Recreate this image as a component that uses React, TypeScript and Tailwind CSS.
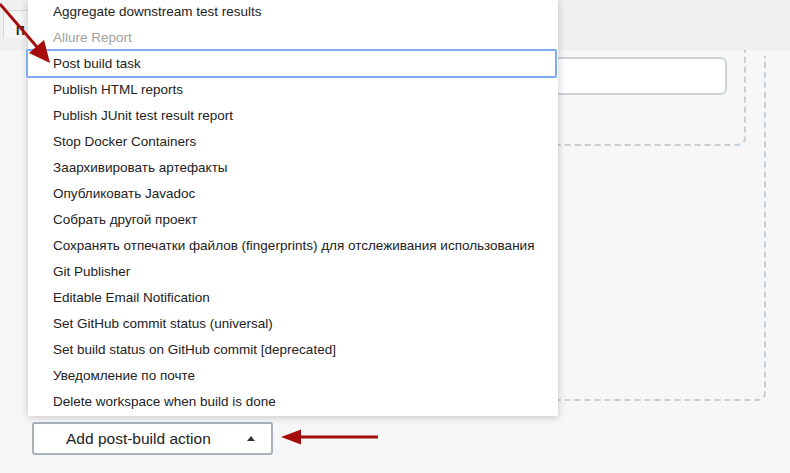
const items = [
  { label: 'Aggregate downstream test results' },
  { label: 'Allure Report', disabled: true },
  { label: 'Post build task', active: true },
  { label: 'Publish HTML reports' },
  { label: 'Publish JUnit test result report' },
  { label: 'Stop Docker Containers' },
  { label: 'Заархивировать артефакты' },
  { label: 'Опубликовать Javadoc' },
  { label: 'Собрать другой проект' },
  { label: 'Сохранять отпечатки файлов (fingerprints) для отслеживания использования' },
  { label: 'Git Publisher' },
  { label: 'Editable Email Notification' },
  { label: 'Set GitHub commit status (universal)' },
  { label: 'Set build status on GitHub commit [deprecated]' },
  { label: 'Уведомление по почте' },
  { label: 'Delete workspace when build is done' },
];

function Arrows() {
  return (
    <svg className="absolute inset-0 pointer-events-none" width="790" height="473" viewBox="0 0 790 473">
      <line x1="0" y1="4" x2="37" y2="47" stroke="#a50d0d" strokeWidth="2.8" />
      <polygon points="50,63 29,53 44,40" fill="#a50d0d" />
      <line x1="298" y1="437" x2="378" y2="437" stroke="#a50d0d" strokeWidth="2.8" />
      <polygon points="281,437 301,429.5 301,444.5" fill="#a50d0d" />
    </svg>
  );
}

export default function App() {
  return (
    <div className="relative w-[790px] h-[473px] overflow-hidden bg-[#f7f7f7] text-[#222] font-['Liberation_Sans',Arial,sans-serif]">
      <div className="h-[50px] bg-[#f0f0f0] pt-[10px] pl-[3px]">
        <div className="w-[60px] h-[28px] border-l border-t border-[#d6d6d6] bg-[#f5f5f5] pl-[12px] pt-[14px] text-[12px] font-bold leading-none">
          П
        </div>
      </div>

      <div className="pl-[40px] pr-[24px] pt-[6px]">
        <div className="flex flex-col h-[345px] border-2 border-t-0 border-dashed border-[#c6ced6] rounded-b-[8px]">
          <div className="-mt-[6px] mr-[18px] h-[96px] border-2 border-t-0 border-dashed border-[#c6ced6] rounded-b-[8px] pt-[7px] pr-[17px] pl-[20px]">
            <div className="h-[38px] bg-white border-2 border-[#cdd3da] rounded-[6px]" />
          </div>
        </div>
      </div>

      <div className="pl-[32px] pt-[21px]">
        <div className="w-[241px] h-[33px] bg-white border-2 border-[#a9b1bb] rounded-[3px] flex items-center pl-[32px] pr-[16px]">
          <span className="text-[15.5px]">Add post-build action</span>
          <span className="ml-auto w-0 h-0 border-l-[4px] border-r-[4px] border-b-[5px] border-l-transparent border-r-transparent border-b-[#333]" />
        </div>
      </div>

      <div className="absolute left-[28px] top-0 w-[530px] h-[416px] bg-white shadow-[0_1px_8px_rgba(0,0,0,0.22)]">
        <div className="-mt-[1px]">
          {items.map((it) => (
            <div
              key={it.label}
              className={`relative h-[26px] flex items-center pl-[25px] text-[13.5px] whitespace-nowrap ${it.disabled ? 'text-[#a0a0a0]' : 'text-[#222]'}`}
            >
              {it.active && (
                <span className="absolute -left-[2px] right-[1px] -top-[2px] -bottom-[1px] border-2 border-[#7eaaf2] rounded-[2px]" />
              )}
              {it.label}
            </div>
          ))}
        </div>
      </div>

      <Arrows />
    </div>
  );
}
